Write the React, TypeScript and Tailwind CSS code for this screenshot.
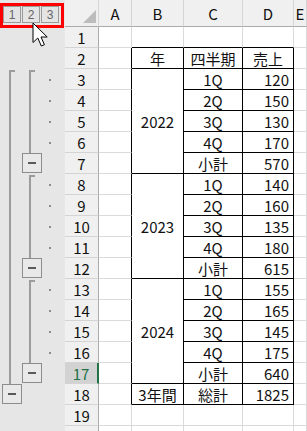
import React from "react";

const COLS = ["A", "B", "C", "D", "E"];
const ROW_COUNT = 20;
const SELECTED_ROW = 17;

// top pixel of a sheet row (row 1 starts right under the 27px column header)
const rowTop = (r: number) => 27 + 21 * (r - 1);

type Row = { b?: string; c: string; d: string };

const data: Record<number, Row> = {
  2: { b: "年", c: "四半期", d: "売上" },
  3: { b: "2022", c: "1Q", d: "120" },
  4: { c: "2Q", d: "150" },
  5: { c: "3Q", d: "130" },
  6: { c: "4Q", d: "170" },
  7: { c: "小計", d: "570" },
  8: { b: "2023", c: "1Q", d: "140" },
  9: { c: "2Q", d: "160" },
  10: { c: "3Q", d: "135" },
  11: { c: "4Q", d: "180" },
  12: { c: "小計", d: "615" },
  13: { b: "2024", c: "1Q", d: "155" },
  14: { c: "2Q", d: "165" },
  15: { c: "3Q", d: "145" },
  16: { c: "4Q", d: "175" },
  17: { c: "小計", d: "640" },
  18: { b: "3年間", c: "総計", d: "1825" },
};

const mergedStarts = [3, 8, 13];
const isMergedInner = (r: number) =>
  mergedStarts.some((s) => r > s && r < s + 5);

const OutlineButton = ({ x, y }: { x: number; y: number }) => (
  <g>
    <rect
      x={x + 0.5}
      y={y + 0.5}
      width={19}
      height={19}
      fill="#e9e9e9"
      stroke="#8c8c8c"
    />
    <rect x={x + 6} y={y + 9} width={8} height={2} fill="#5a5a5a" />
  </g>
);

const OutlineBars = () => (
  <svg width={65} height={404} viewBox="0 27 65 404">
    {/* level 1 group: rows 3-17 */}
    <rect x={9} y={70} width={6} height={2} fill="#9c9c9c" />
    <rect x={9} y={70} width={2} height={rowTop(18) - 70} fill="#9c9c9c" />
    <OutlineButton x={2} y={rowTop(18)} />

    {/* level 2 groups */}
    {mergedStarts.map((g) => (
      <g key={g}>
        <rect x={29} y={rowTop(g) + 1} width={6} height={2} fill="#9c9c9c" />
        <rect
          x={29}
          y={rowTop(g) + 1}
          width={2}
          height={rowTop(g + 4) - rowTop(g) - 1}
          fill="#9c9c9c"
        />
        <OutlineButton x={22} y={rowTop(g + 4)} />
        {[0, 1, 2, 3].map((i) => (
          <rect
            key={i}
            x={49}
            y={rowTop(g + i) + 10}
            width={2}
            height={2}
            fill="#8c8c8c"
          />
        ))}
      </g>
    ))}
  </svg>
);

const Cursor = () => (
  <svg
    width={17}
    height={26}
    viewBox="0 0 17 26"
    className="absolute left-[32px] top-[22px]"
  >
    <path
      d="M1 1 L1 20.5 L5.8 16 L9.3 24 L12.4 22.7 L9 15 L15.2 15 Z"
      fill="#ffffff"
      stroke="#000000"
      strokeWidth={1}
      strokeLinejoin="miter"
    />
  </svg>
);

function cellClass(r: number, col: string) {
  const rightBlack = r >= 2 && r <= 18 && col !== "E";
  const bottomBlack = r <= 18 && (col === "B" || col === "C" || col === "D");
  return `border-r border-b ${rightBlack ? "border-r-black" : "border-r-[#dadada]"} ${
    bottomBlack ? "border-b-black" : "border-b-[#dadada]"
  }`;
}

export default function App() {
  const rows = Array.from({ length: ROW_COUNT }, (_, i) => i + 1);

  return (
    <div className="relative w-[307px] h-[431px] overflow-hidden bg-white font-['Noto_Sans_CJK_JP','Noto_Sans',sans-serif] text-[15px] leading-none text-[#111]">
      <div className="grid grid-cols-[65px_34px_33px_52px_59px_51px_1fr] grid-rows-[27px_repeat(20,21px)]">
        {/* outline gutter */}
        <div className="[grid-column:1] [grid-row:1/22] flex flex-col bg-[#e6e6e6]">
          <div className="h-[27px] flex gap-[1px] pl-[3px] pt-[6px]">
            {["1", "2", "3"].map((n) => (
              <div
                key={n}
                className="w-[18px] h-[17px] border border-[#9a9a9a] bg-[#e4e4e4] flex items-center justify-center text-[12px] text-[#666] font-['Liberation_Sans',sans-serif]"
              >
                {n}
              </div>
            ))}
          </div>
          <OutlineBars />
        </div>

        {/* corner */}
        <div className="relative bg-[#f0f0f0] border-r border-b border-r-[#d4d4d4] border-b-[#ababab]">
          <svg width={33} height={26} className="absolute left-0 top-0">
            <polygon points="31,10 31,23 18,23" fill="#bcbcbc" />
          </svg>
        </div>

        {/* column headers */}
        {COLS.map((c) => (
          <div
            key={c}
            className="flex items-center justify-center bg-[#f0f0f0] border-r border-b border-r-[#d4d4d4] border-b-[#ababab] pt-[1px]"
          >
            {c}
          </div>
        ))}

        {/* sheet rows */}
        {rows.map((r) => {
          const row = data[r];
          const selected = r === SELECTED_ROW;
          return (
            <React.Fragment key={r}>
              <div
                className={`flex items-center justify-center border-b border-b-[#d4d4d4] ${
                  selected
                    ? "bg-[#d2d2d2] text-[#217346] border-r-2 border-r-[#217346]"
                    : "bg-[#f0f0f0] border-r border-r-[#ababab]"
                }`}
              >
                {r < ROW_COUNT ? r : ""}
              </div>

              <div className={cellClass(r, "A")} />

              {!isMergedInner(r) && (
                <div
                  className={`${cellClass(r, "B")} flex items-center justify-center ${
                    mergedStarts.includes(r) ? "row-span-5" : ""
                  }`}
                >
                  {row?.b}
                </div>
              )}

              <div className={`${cellClass(r, "C")} flex items-center justify-center`}>
                {row?.c}
              </div>

              <div
                className={`${cellClass(r, "D")} flex items-center ${
                  r === 2 ? "justify-center" : "justify-end pr-[4px]"
                }`}
              >
                {row?.d}
              </div>

              <div className={cellClass(r, "E")} />
            </React.Fragment>
          );
        })}
      </div>

      {/* red highlight around the outline level buttons */}
      <div className="absolute left-0 top-[3px] w-[64px] h-[25px] border-[3px] border-[#ff0000]" />

      <Cursor />
    </div>
  );
}
